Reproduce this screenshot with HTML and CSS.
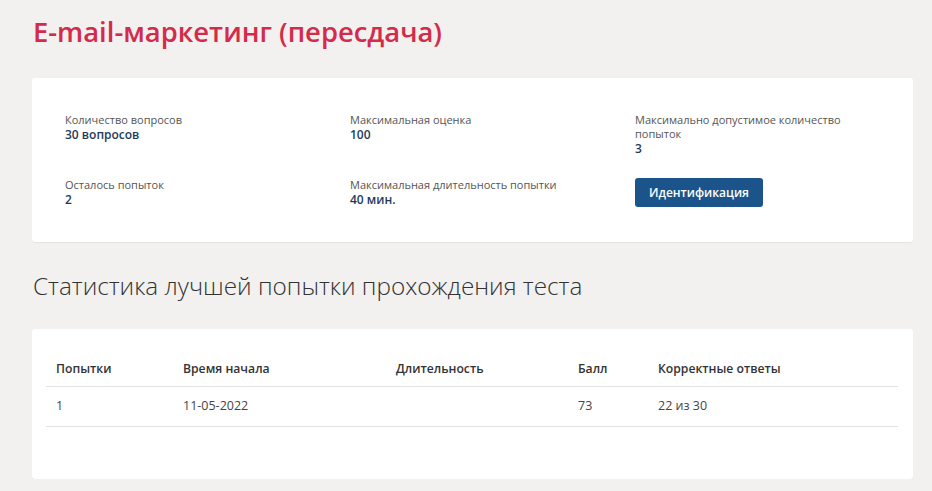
FILE: index.html
```
<!DOCTYPE html>
<html lang="ru">
<head>
    <meta charset="UTF-8">
    <meta name="viewport" content="width=device-width, initial-scale=1.0">
    <title>E-mail-маркетинг (пересдача)</title>
    <link rel="stylesheet" href="styles.css">
</head>
<body>
    <div class="page">
        <h1 class="test-title">E-mail-маркетинг (пересдача)</h1>

        <div class="card info-card">
            <div class="info-grid">
                <div class="info-item">
                    <div class="info-label">Количество вопросов</div>
                    <div class="info-value">30 вопросов</div>
                </div>
                <div class="info-item">
                    <div class="info-label">Максимальная оценка</div>
                    <div class="info-value">100</div>
                </div>
                <div class="info-item">
                    <div class="info-label">Максимально допустимое количество попыток</div>
                    <div class="info-value">3</div>
                </div>
                <div class="info-item">
                    <div class="info-label">Осталось попыток</div>
                    <div class="info-value">2</div>
                </div>
                <div class="info-item">
                    <div class="info-label">Максимальная длительность попытки</div>
                    <div class="info-value">40 мин.</div>
                </div>
                <div class="info-item">
                    <button type="button" class="btn-ident">Идентификация</button>
                </div>
            </div>
        </div>

        <h2 class="section-title">Статистика лучшей попытки прохождения теста</h2>

        <div class="card stats-card">
            <table class="stats-table">
                <thead>
                    <tr>
                        <th class="col-try">Попытки</th>
                        <th class="col-start">Время начала</th>
                        <th class="col-dur">Длительность</th>
                        <th class="col-score">Балл</th>
                        <th>Корректные ответы</th>
                    </tr>
                </thead>
                <tbody>
                    <tr>
                        <td>1</td>
                        <td>11-05-2022</td>
                        <td></td>
                        <td>73</td>
                        <td>22 из 30</td>
                    </tr>
                </tbody>
            </table>
        </div>
    </div>
</body>
</html>
```

FILE: styles.css
```
body {
    margin: 0;
    background: #f2f1ef;
    font-family: "Open Sans", Arial, sans-serif;
    color: #333;
}
.page {
    padding: 14px 19px 0 32px;
}
.test-title {
    margin: 0 0 28px 1px;
    font-size: 27.4px;
    font-weight: 600;
    line-height: 36px;
    color: #d42b4a;
}
.card {
    background: #fff;
    border-radius: 3px;
    box-shadow: 0 1px 1px rgba(0,0,0,0.06);
}
.info-card {
    padding: 35px 33px 35px 33px;
}
.info-grid {
    display: grid;
    grid-template-columns: 285px 285px 215px;
    row-gap: 22px;
}
.info-label {
    font-size: 11px;
    line-height: 14px;
    color: #555;
}
.info-value {
    font-size: 12px;
    line-height: 15px;
    font-weight: 600;
    color: #1f3a5a;
}
.btn-ident {
    background: #1b548a;
    color: #fff;
    border: none;
    border-radius: 3px;
    padding: 0 14px;
    height: 29px;
    font-family: "Open Sans", Arial, sans-serif;
    font-size: 12px;
    font-weight: 600;
    cursor: pointer;
}
.section-title {
    margin: 28px 0 27px 1px;
    font-size: 24.3px;
    font-weight: 300;
    line-height: 32px;
    color: #333;
}
.stats-card {
    padding: 23px 15px 52px 14px;
}
.stats-table {
    width: 100%;
    border-collapse: collapse;
    font-size: 12.5px;
}
.stats-table th {
    text-align: left;
    font-size: 12.2px;
    font-weight: 600;
    padding: 9px 10px 9px;
    line-height: 16px;
    border-bottom: 1px solid #e2e2e2;
}
.stats-table td {
    padding: 11px 10px 12px;
    line-height: 16px;
    border-bottom: 1px solid #e2e2e2;
    color: #444;
}
.col-try { width: 107px; }
.col-start { width: 193px; }
.col-dur { width: 162px; }
.col-score { width: 60px; }
```
